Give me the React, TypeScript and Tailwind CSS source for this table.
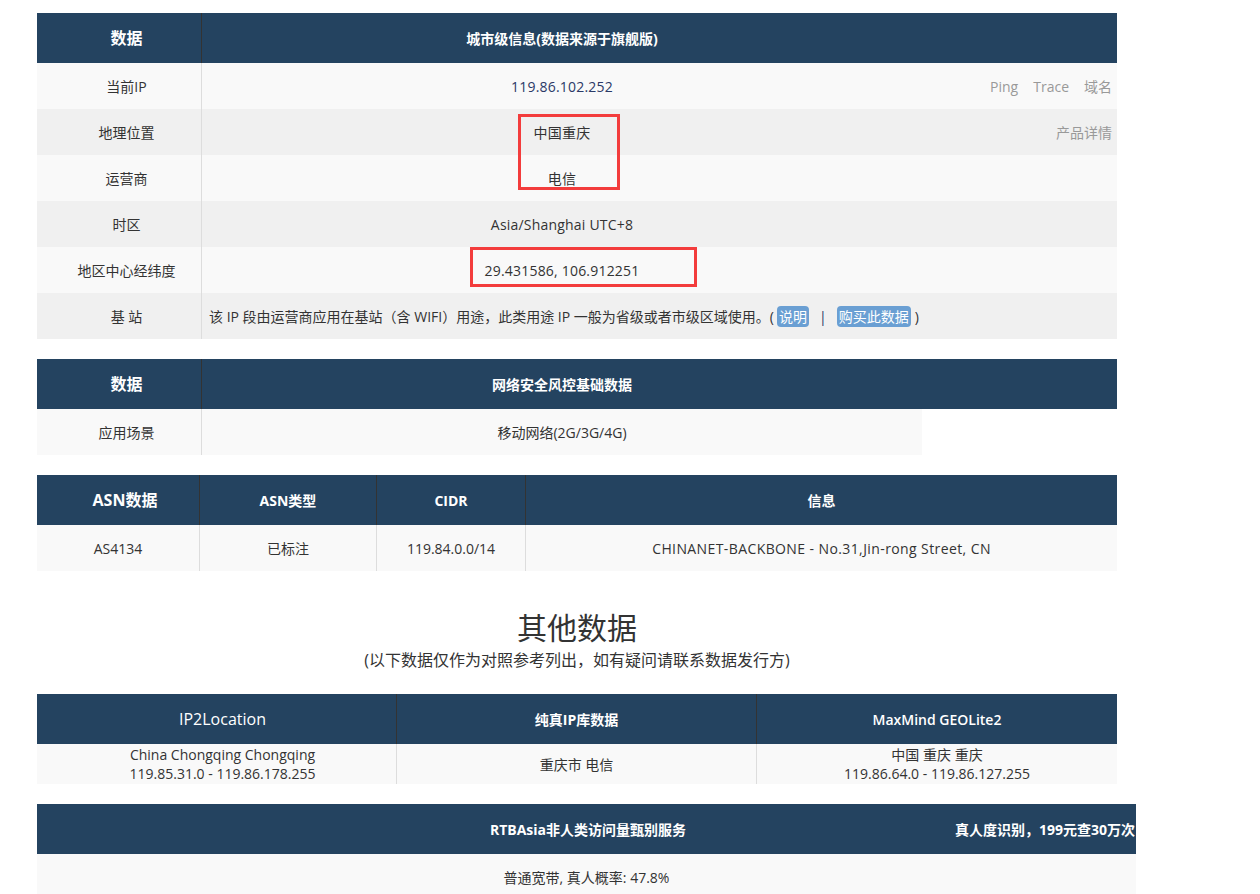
import React from "react";

const F = { fontFamily: '"Open Sans","Noto Sans CJK SC",sans-serif' };

function Row1({ label, bg, children, extra }: { label: string; bg: string; children?: React.ReactNode; extra?: React.ReactNode }) {
  return (
    <div className={`grid grid-cols-[165px_720px_195px] h-[46px] ${bg}`}>
      <div className="flex items-center justify-center pl-[15px] border-r border-[#dddddd] text-[14px] text-[#333]">{label}</div>
      <div className="flex items-center justify-center text-[14px] text-[#333] tracking-[0.2px]">{children}</div>
      <div className="flex items-center justify-end text-[14px] text-[#999] gap-[15px] pr-[5px]">{extra}</div>
    </div>
  );
}

export default function App() {
  return (
    <div className="bg-white min-h-[894px] w-[1260px] overflow-hidden" style={F}>
      <div className="relative ml-[37px] w-[1080px] pt-[13px]">
        {/* Table 1 */}
        <div>
          <div className="grid grid-cols-[165px_720px_195px] h-[50px] bg-[#244360] text-white">
            <div className="flex items-center justify-center pl-[15px] border-r border-[#333] text-[16px] font-bold">数据</div>
            <div className="flex items-center justify-center text-[14px] font-bold">城市级信息(数据来源于旗舰版)</div>
            <div />
          </div>
          <Row1
            label="当前IP"
            bg="bg-[#f9f9f9]"
            extra={
              <>
                <span>Ping</span>
                <span>Trace</span>
                <span>域名</span>
              </>
            }
          >
            <span className="text-[#2b3a67]">119.86.102.252</span>
          </Row1>
          <Row1 label="地理位置" bg="bg-[#f0f0f0]" extra={<span className="text-[14px]">产品详情</span>}>
            中国重庆
          </Row1>
          <Row1 label="运营商" bg="bg-[#f9f9f9]">电信</Row1>
          <Row1 label="时区" bg="bg-[#f0f0f0]">Asia/Shanghai UTC+8</Row1>
          <Row1 label="地区中心经纬度" bg="bg-[#f9f9f9]">29.431586, 106.912251</Row1>
          <div className="grid grid-cols-[165px_915px] h-[46px] bg-[#f0f0f0]">
            <div className="flex items-center justify-center pl-[15px] border-r border-[#dddddd] text-[14px] text-[#333]">基 站</div>
            <div className="flex items-center pl-[7px] text-[14px] text-[#333] whitespace-nowrap">
              该 IP 段由运营商应用在基站（含 WIFI）用途，此类用途 IP 一般为省级或者市级区域使用。(
              <span className="bg-[#6a9fd3] text-white rounded-[4px] px-[2px] ml-[3px]">说明</span>
              <span className="mx-[10px] text-[#2b3a67]">|</span>
              <span className="bg-[#6a9fd3] text-white rounded-[4px] px-[2px]">购买此数据</span>
              <span className="ml-[4px]">)</span>
            </div>
          </div>
        </div>

        {/* Table 2 */}
        <div className="mt-[20px]">
          <div className="grid grid-cols-[165px_720px_195px] h-[50px] bg-[#244360] text-white">
            <div className="flex items-center justify-center pl-[15px] border-r border-[#333] text-[16px] font-bold">数据</div>
            <div className="flex items-center justify-center text-[14px] font-bold">网络安全风控基础数据</div>
            <div />
          </div>
          <div className="grid grid-cols-[165px_720px_195px] h-[46px]">
            <div className="flex items-center justify-center pl-[15px] border-r border-[#dddddd] bg-[#f9f9f9] text-[14px] text-[#333]">应用场景</div>
            <div className="flex items-center justify-center bg-[#f9f9f9] text-[14px] text-[#333]">移动网络(2G/3G/4G)</div>
            <div className="bg-white" />
          </div>
        </div>

        {/* Table 3 */}
        <div className="mt-[20px]">
          <div className="grid grid-cols-[163px_177px_149px_591px] h-[50px] bg-[#244360] text-white">
            <div className="flex items-center justify-center pl-[14px] border-r border-[#333] text-[16px] font-bold">ASN数据</div>
            <div className="flex items-center justify-center border-r border-[#333] text-[14px] font-bold">ASN类型</div>
            <div className="flex items-center justify-center border-r border-[#333] text-[14px] font-bold">CIDR</div>
            <div className="flex items-center justify-center text-[14px] font-bold">信息</div>
          </div>
          <div className="grid grid-cols-[163px_177px_149px_591px] h-[46px] bg-[#f9f9f9] text-[14px] text-[#333]">
            <div className="flex items-center justify-center border-r border-[#dddddd]">AS4134</div>
            <div className="flex items-center justify-center border-r border-[#dddddd]">已标注</div>
            <div className="flex items-center justify-center border-r border-[#dddddd]">119.84.0.0/14</div>
            <div className="flex items-center justify-center tracking-[0.4px]">CHINANET-BACKBONE - No.31,Jin-rong Street, CN</div>
          </div>
        </div>

        {/* Title */}
        <div className="mt-[39px] flex flex-col items-center text-[#333]">
          <div className="text-[30px] leading-[36px]">其他数据</div>
          <div className="text-[16px] leading-[22px] mt-[3px]">(以下数据仅作为对照参考列出，如有疑问请联系数据发行方)</div>
        </div>

        {/* Table 4 */}
        <div className="mt-[23px]">
          <div className="grid grid-cols-[360px_360px_360px] h-[50px] bg-[#244360] text-white">
            <div className="flex items-center justify-center pl-[12px] border-r border-[#333] text-[16px] font-medium">IP2Location</div>
            <div className="flex items-center justify-center border-r border-[#333] text-[14px] font-bold">纯真IP库数据</div>
            <div className="flex items-center justify-center text-[14px] font-semibold">MaxMind GEOLite2</div>
          </div>
          <div className="grid grid-cols-[360px_360px_360px] h-[40px] bg-[#f9f9f9] text-[14px] leading-[19px] text-[#333]">
            <div className="flex flex-col items-center justify-center pl-[12px] border-r border-[#dddddd]">
              <span>China Chongqing Chongqing</span>
              <span>119.85.31.0 - 119.86.178.255</span>
            </div>
            <div className="flex items-center justify-center border-r border-[#dddddd]">重庆市 电信</div>
            <div className="flex flex-col items-center justify-center">
              <span>中国 重庆 重庆</span>
              <span>119.86.64.0 - 119.86.127.255</span>
            </div>
          </div>
        </div>

        {/* Table 5 */}
        <div className="mt-[20px] w-[1099px]">
          <div className="relative h-[50px] bg-[#244360] text-white flex items-center justify-center pl-[3px]">
            <span className="text-[14px] font-bold">RTBAsia非人类访问量甄别服务</span>
            <span className="absolute right-[1px] top-0 h-full flex items-center text-[14px] font-bold">真人度识别，199元查30万次</span>
          </div>
          <div className="h-[46px] bg-[#f9f9f9] flex items-center justify-center text-[14px] text-[#333]">
            普通宽带, 真人概率: 47.8%
          </div>
        </div>

        {/* red annotation boxes */}
        <div className="absolute left-[481px] top-[114px] w-[102px] h-[76px] border-[3px] border-[#f33c3c]" />
        <div className="absolute left-[433px] top-[247px] w-[227px] h-[40px] border-[3px] border-[#f33c3c]" />
      </div>
    </div>
  );
}
